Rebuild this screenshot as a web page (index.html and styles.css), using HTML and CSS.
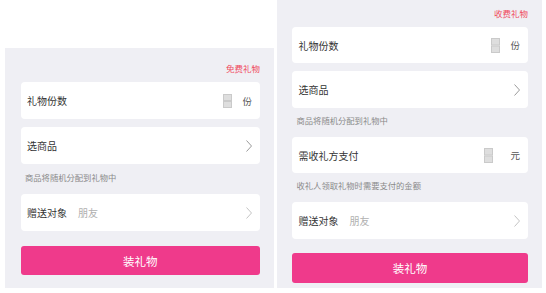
FILE: index.html
```html
<!DOCTYPE html>
<html lang="zh-CN">
  <head>
    <meta charset="UTF-8" />
    <meta name="viewport" content="width=device-width, initial-scale=1.0" />
    <title>装礼物</title>
    <link rel="stylesheet" href="styles.css">
  </head>
  <body>
    <div class="panel panel-free">
      <div class="panel-head">免费礼物</div>
      <div class="card">
        <span class="label">礼物份数</span>
        <span class="spacer"></span>
        <svg class="stepper" width="9" height="14" viewBox="0 0 9 14">
          <rect x="0.5" y="0.5" width="8" height="6" fill="#dedede" stroke="#cacaca" />
          <rect x="0.5" y="7.5" width="8" height="6" fill="#dedede" stroke="#cacaca" />
        </svg>
        <span class="unit">份</span>
      </div>
      <div class="card card-gap">
        <span class="label">选商品</span>
        <span class="spacer"></span>
        <svg class="arrow" width="6" height="12" viewBox="0 0 6 12">
          <polyline points="0.5,0.5 5.5,6 0.5,11.5" fill="none" stroke="#9a9a9a" stroke-width="1" />
        </svg>
      </div>
      <div class="hint">商品将随机分配到礼物中</div>
      <div class="card">
        <span class="label">赠送对象</span>
        <span class="placeholder">朋友</span>
        <span class="spacer"></span>
        <svg class="arrow arrow-light" width="6" height="12" viewBox="0 0 6 12">
          <polyline points="0.5,0.5 5.5,6 0.5,11.5" fill="none" stroke="#c4c4c4" stroke-width="1" />
        </svg>
      </div>
      <button class="submit">装礼物</button>
    </div>

    <div class="panel panel-paid">
      <div class="panel-head">收费礼物</div>
      <div class="card card-short">
        <span class="label">礼物份数</span>
        <span class="spacer"></span>
        <svg class="stepper" width="9" height="15" viewBox="0 0 9 15">
          <rect x="0.5" y="0.5" width="8" height="6.5" fill="#dedede" stroke="#cacaca" />
          <rect x="0.5" y="8" width="8" height="6.5" fill="#dedede" stroke="#cacaca" />
        </svg>
        <span class="unit">份</span>
      </div>
      <div class="card card-gap">
        <span class="label">选商品</span>
        <span class="spacer"></span>
        <svg class="arrow" width="6" height="12" viewBox="0 0 6 12">
          <polyline points="0.5,0.5 5.5,6 0.5,11.5" fill="none" stroke="#9a9a9a" stroke-width="1" />
        </svg>
      </div>
      <div class="hint hint-short">商品将随机分配到礼物中</div>
      <div class="card card-short">
        <span class="label">需收礼方支付</span>
        <span class="spacer"></span>
        <svg class="stepper stepper-wide" width="9" height="15" viewBox="0 0 9 15">
          <rect x="0.5" y="0.5" width="8" height="6.5" fill="#dedede" stroke="#cacaca" />
          <rect x="0.5" y="8" width="8" height="6.5" fill="#dedede" stroke="#cacaca" />
        </svg>
        <span class="unit">元</span>
      </div>
      <div class="hint hint-short">收礼人领取礼物时需要支付的金额</div>
      <div class="card">
        <span class="label">赠送对象</span>
        <span class="placeholder">朋友</span>
        <span class="spacer"></span>
        <svg class="arrow arrow-light" width="6" height="12" viewBox="0 0 6 12">
          <polyline points="0.5,0.5 5.5,6 0.5,11.5" fill="none" stroke="#c4c4c4" stroke-width="1" />
        </svg>
      </div>
      <button class="submit submit-tall">装礼物</button>
    </div>
  </body>
</html>
```

FILE: styles.css
```css
body {
  margin: 0;
  height: 293px;
  display: flex;
  align-items: flex-start;
  gap: 3px;
  background-color: #ffffff;
  font-family: "Noto Sans CJK SC", "Noto Sans", sans-serif;
  color: #333333;
}

.panel {
  display: flex;
  flex-direction: column;
  background-color: #efeff4;
  box-sizing: border-box;
}

.panel-free {
  margin-left: 5px;
  margin-top: 48px;
  width: 269px;
  height: 240px;
  padding: 0 14px 13px 15.5px;
}

.panel-paid {
  width: 265px;
  height: 288px;
  padding: 0 14px 5px 15px;
}

.panel-head {
  text-align: right;
  font-size: 8.5px;
  line-height: 12px;
  color: #f04a5e;
  padding-top: 14px;
  padding-bottom: 8px;
}

.panel-paid .panel-head {
  padding-top: 7px;
}

.card {
  display: flex;
  align-items: center;
  height: 37px;
  padding: 0 8px 0 6.5px;
  background-color: #ffffff;
  border-radius: 4px;
  box-sizing: border-box;
}

.card-short {
  height: 36px;
}

.card-gap {
  margin-top: 8px;
}

.label {
  font-size: 10px;
  color: #333333;
}

.placeholder {
  font-size: 10px;
  color: #b0b0b0;
  margin-left: 11px;
}

.spacer {
  flex: 1;
}

.stepper {
  display: block;
}

.unit {
  font-size: 9.5px;
  color: #555555;
  margin-left: 10px;
}

.stepper-wide + .unit {
  margin-left: 17px;
}

.arrow {
  display: block;
}

.hint {
  height: 30px;
  box-sizing: border-box;
  padding: 8px 0 0 4.5px;
  font-size: 8.3px;
  line-height: 10px;
  color: #8a8a8a;
}

.hint-short {
  height: 29px;
  padding-top: 7px;
}

.submit {
  margin-top: 15px;
  height: 29px;
  border: none;
  border-radius: 3px;
  background-color: #ef3a8b;
  color: #ffffff;
  font-family: inherit;
  font-size: 11.5px;
  padding: 0;
}

.submit-tall {
  margin-top: 14px;
  height: 30px;
}
```
